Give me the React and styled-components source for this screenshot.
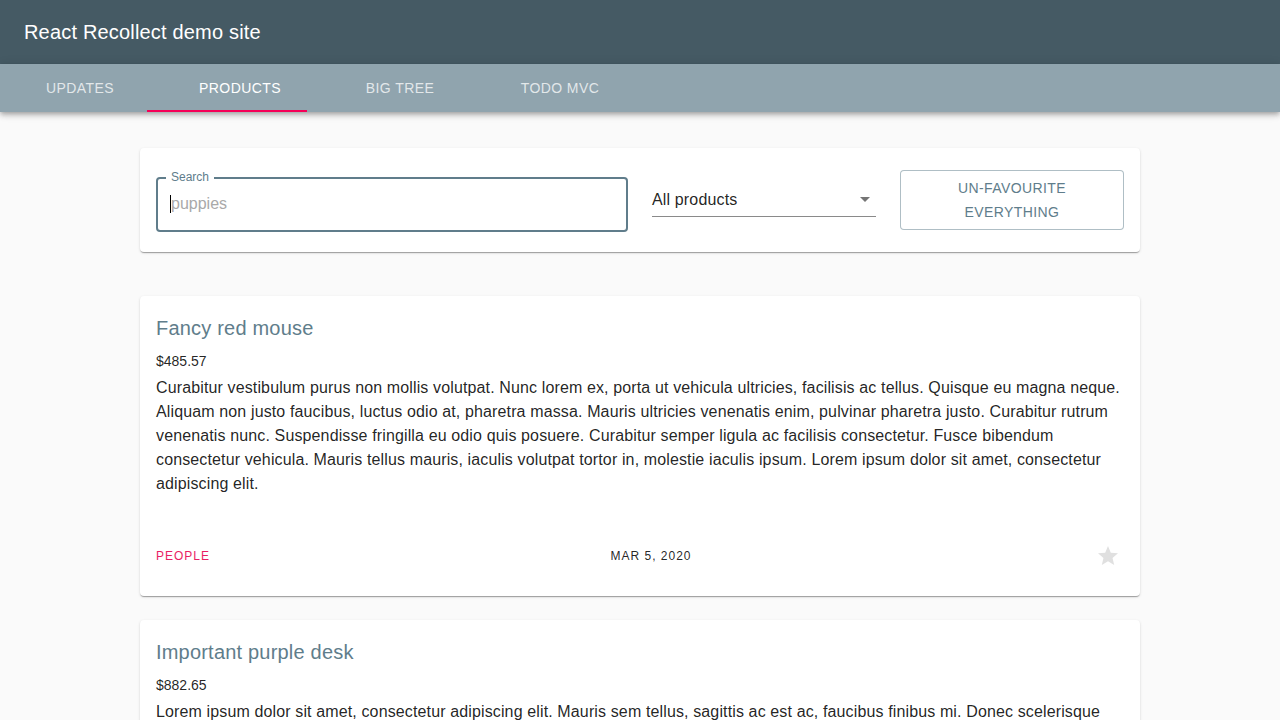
import React from "react";
import styled, { createGlobalStyle } from "styled-components";

const GlobalStyle = createGlobalStyle`
  html, body { margin: 0; padding: 0; background: #fafafa; }
  body { font-family: "Liberation Sans", Arial, sans-serif; color: rgba(0,0,0,0.87); }
  * { box-sizing: border-box; }
`;

const AppBar = styled.header`
  height: 64px;
  background: #455a64;
  display: flex;
  align-items: center;
  padding: 0 24px;
`;

const Title = styled.h1`
  margin: 0;
  font-size: 20px;
  font-weight: 400;
  color: #fff;
  letter-spacing: 0.18px;
`;

const TabBar = styled.nav`
  position: relative;
  height: 48px;
  background: #90a4ae;
  display: flex;
  box-shadow: 0px 2px 4px -1px rgba(0,0,0,0.2), 0px 4px 5px 0px rgba(0,0,0,0.14), 0px 1px 10px 0px rgba(0,0,0,0.12);
  z-index: 1;
`;

const Tab = styled.div`
  width: 160px;
  height: 48px;
  display: flex;
  align-items: center;
  justify-content: center;
  font-size: 14px;
  letter-spacing: 0.4px;
  text-transform: uppercase;
  color: ${(p) => (p.$active ? "#fff" : "rgba(255,255,255,0.75)")};
`;

const Indicator = styled.span`
  position: absolute;
  left: 147px;
  bottom: 0;
  width: 160px;
  height: 2px;
  background: #f50057;
`;

const Main = styled.main`
  width: 1000px;
  margin: 36px auto 0;
  display: flex;
  flex-direction: column;
`;

const Paper = styled.section`
  background: #fff;
  border-radius: 4px;
  box-shadow: 0px 2px 1px -1px rgba(0,0,0,0.2), 0px 1px 1px 0px rgba(0,0,0,0.14), 0px 1px 3px 0px rgba(0,0,0,0.12);
`;

const FilterCard = styled(Paper)`
  padding: 16px;
  display: grid;
  grid-template-columns: 1fr 224px 224px;
  column-gap: 24px;
  align-items: center;
  height: 104px;
  margin-bottom: 44px;
`;

const SearchField = styled.div`
  position: relative;
  margin-top: 8px;
  height: 55px;
  border: 2px solid #607d8b;
  border-radius: 4px;
  display: flex;
  align-items: center;
  padding: 0 12px;
`;

const SearchLabel = styled.span`
  position: absolute;
  top: -9px;
  left: 8px;
  padding: 0 5px;
  background: #fff;
  font-size: 12px;
  line-height: 14px;
  color: #607d8b;
`;

const SearchInput = styled.input`
  border: none;
  outline: none;
  width: 100%;
  font-family: inherit;
  font-size: 16px;
  color: rgba(0,0,0,0.87);
  padding: 0;
  border-left: 1px solid #000;
  &::placeholder { color: #a9a9a9; }
`;

const Select = styled.div`
  display: flex;
  align-items: center;
  justify-content: space-between;
  height: 32px;
  margin-top: 1px;
  border-bottom: 1px solid #8a8a8a;
  font-size: 16px;
  letter-spacing: 0.15px;
  padding-bottom: 1px;
`;

const Caret = styled.span`
  width: 0;
  height: 0;
  margin-right: 6px;
  border-left: 5px solid transparent;
  border-right: 5px solid transparent;
  border-top: 5px solid #757575;
`;

const OutlineButton = styled.button`
  height: 60px;
  margin-top: 0;
  background: #fff;
  border: 1px solid rgba(96,125,139,0.5);
  border-radius: 4px;
  color: #607d8b;
  font-family: inherit;
  font-size: 14px;
  line-height: 24px;
  letter-spacing: 0.4px;
  text-transform: uppercase;
  padding: 5px 40px;
`;

const ProductCard = styled(Paper)`
  padding: 16px 16px 16px;
  margin-bottom: 24px;
`;

const ProductTitle = styled.h2`
  margin: 0 0 8px;
  font-size: 20px;
  line-height: 32px;
  font-weight: 400;
  letter-spacing: 0.2px;
  color: #607d8b;
`;

const Price = styled.div`
  font-size: 14px;
  line-height: 20px;
  margin-top: -1px;
  margin-bottom: 5px;
`;

const Body = styled.p`
  margin: 0;
  font-size: 16px;
  line-height: 24px;
  letter-spacing: 0.13px;
`;

const Footer = styled.div`
  display: flex;
  align-items: center;
  justify-content: space-between;
  margin-top: 36px;
  height: 48px;
`;

const Meta = styled.span`
  font-size: 12px;
  letter-spacing: 1px;
  text-transform: uppercase;
  color: ${(p) => p.$color || "rgba(0,0,0,0.87)"};
  ${(p) => (p.$shift ? `margin-left: ${p.$shift}px;` : "")}
`;

const StarButton = styled.button`
  width: 48px;
  height: 48px;
  margin-right: -8px;
  border: none;
  background: transparent;
  padding: 12px;
  display: flex;
  align-items: center;
  justify-content: center;
  color: #e0e0e0;
`;

const Star = () => (
  <svg width="24" height="24" viewBox="0 0 24 24" fill="currentColor">
    <path d="M12 17.27L18.18 21l-1.64-7.03L22 9.24l-7.19-.61L12 2 9.19 8.63 2 9.24l5.46 4.73L5.82 21z" />
  </svg>
);

const products = [
  {
    name: "Fancy red mouse",
    price: "$485.57",
    body:
      "Curabitur vestibulum purus non mollis volutpat. Nunc lorem ex, porta ut vehicula ultricies, facilisis ac tellus. Quisque eu magna neque. Aliquam non justo faucibus, luctus odio at, pharetra massa. Mauris ultricies venenatis enim, pulvinar pharetra justo. Curabitur rutrum venenatis nunc. Suspendisse fringilla eu odio quis posuere. Curabitur semper ligula ac facilisis consectetur. Fusce bibendum consectetur vehicula. Mauris tellus mauris, iaculis volutpat tortor in, molestie iaculis ipsum. Lorem ipsum dolor sit amet, consectetur adipiscing elit.",
    category: "People",
    date: "Mar 5, 2020",
  },
  {
    name: "Important purple desk",
    price: "$882.65",
    body:
      "Lorem ipsum dolor sit amet, consectetur adipiscing elit. Mauris sem tellus, sagittis ac est ac, faucibus finibus mi. Donec scelerisque arcu eget lacus fermentum, vitae ultrices turpis tristique. Nulla facilisi. Praesent at justo vel nisi sollicitudin hendrerit. Sed gravida dui non metus volutpat, sed luctus nisl consequat.",
    category: "Office",
    date: "Feb 18, 2020",
  },
];

export default function App() {
  return (
    <>
      <GlobalStyle />
      <AppBar>
        <Title>React Recollect demo site</Title>
      </AppBar>
      <TabBar>
        <Tab>Updates</Tab>
        <Tab $active>Products</Tab>
        <Tab>Big tree</Tab>
        <Tab>Todo MVC</Tab>
        <Indicator />
      </TabBar>
      <Main>
        <FilterCard>
          <SearchField>
            <SearchLabel>Search</SearchLabel>
            <SearchInput placeholder="puppies" />
          </SearchField>
          <Select>
            <span>All products</span>
            <Caret />
          </Select>
          <OutlineButton>Un-favourite everything</OutlineButton>
        </FilterCard>
        {products.map((p) => (
          <ProductCard key={p.name}>
            <ProductTitle>{p.name}</ProductTitle>
            <Price>{p.price}</Price>
            <Body>{p.body}</Body>
            <Footer>
              <Meta $color="#e91e63">{p.category}</Meta>
              <Meta $shift={8}>{p.date}</Meta>
              <StarButton aria-label="favourite">
                <Star />
              </StarButton>
            </Footer>
          </ProductCard>
        ))}
      </Main>
    </>
  );
}
